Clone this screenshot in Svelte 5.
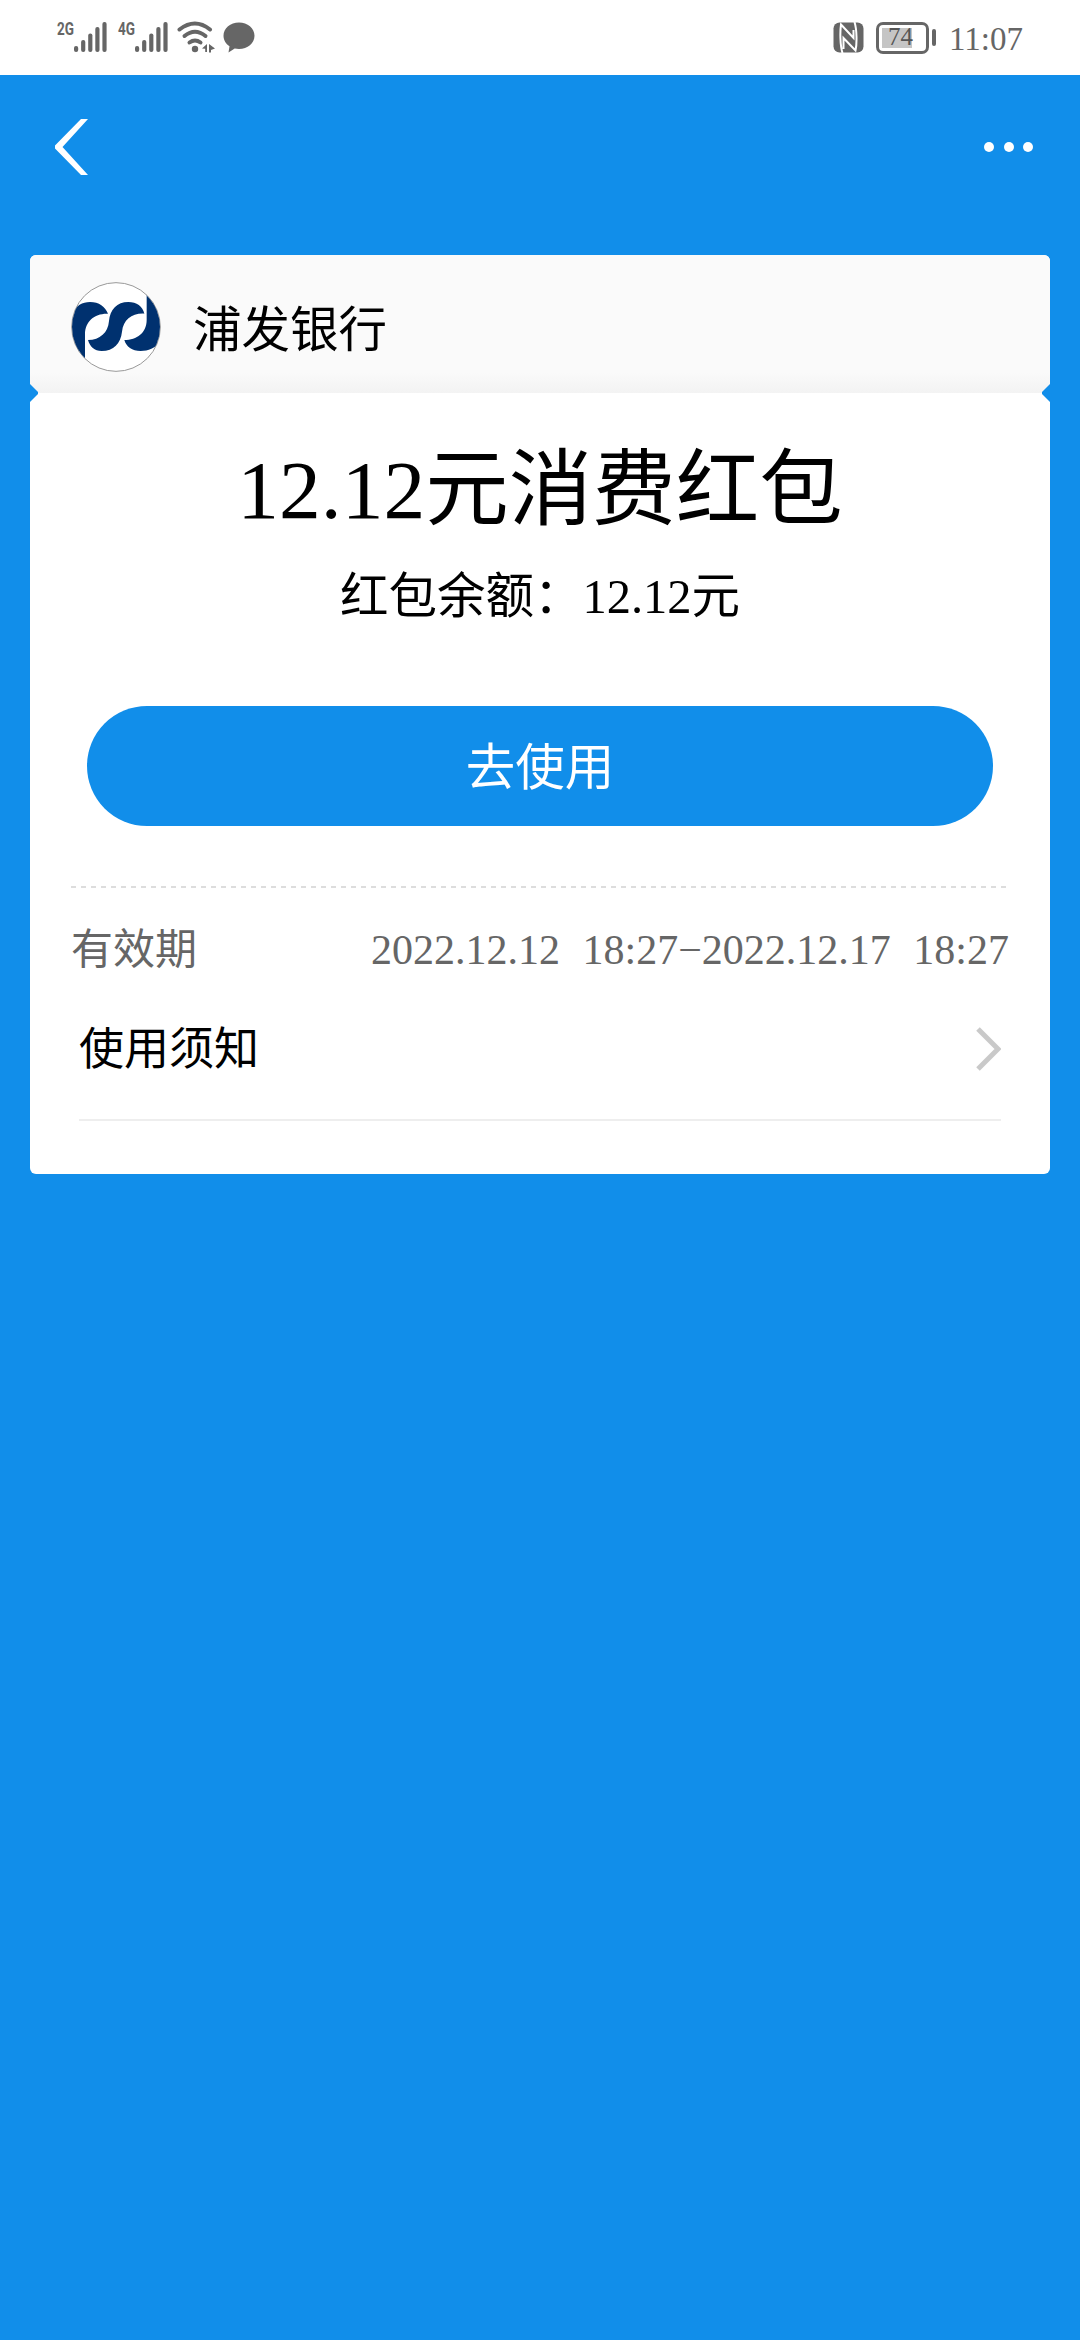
<script lang="ts">
  const bank = '浦发银行';
  const coupon = {
    title: '12.12元消费红包',
    balance: '红包余额：12.12元',
    from: '2022.12.12 18:27',
    to: '2022.12.17 18:27'
  };
  const battery = 74;
  const networks = ['2G', '4G'];
  const bars = [6, 12, 18.5, 25, 30];
</script>

<div class="page">
  <div class="status">
    <div class="left">
      {#each networks as net}
        <svg class="signal" width="51" height="38" viewBox="0 -4 51 38">
          <text x="0" y="16" textLength="17" lengthAdjust="spacingAndGlyphs">{net}</text>
          {#each bars as h, i}
            <rect x={17 + i * 7.1} y={33 - h} width="4.2" height={h} rx="2" />
          {/each}
        </svg>
      {/each}
      <svg class="wifi" width="38" height="34" viewBox="0 0 38 34">
        <g fill="none" stroke="#666" stroke-width="4" stroke-linecap="round">
          <path d="M2.5 10.5Q18 -1.5 33 10.5" />
          <path d="M7.5 17Q18 8.5 28.5 17" />
          <path d="M12.5 23.5Q18 19.5 23.5 23.5" />
        </g>
        <circle cx="18" cy="30" r="3.2" />
        <path d="M30 25v8h-1.8v-3.2L25 29.500zM32 25l6 4.500-4 1.500v2.500h-2z" />
      </svg>
      <svg class="bubble" width="32" height="34" viewBox="0 0 32 34">
        <path d="M16 3.500c8.600 0 15.500 5.800 15.500 13.300S24.600 30 16 30c-1.500 0-3-.2-4.300-.5L5.500 33.500l1-6.200C2.800 24.900.5 21.100.5 16.800.5 9.300 7.400 3.500 16 3.500z" />
      </svg>
    </div>
    <div class="right">
      <svg class="nfc" width="31" height="31" viewBox="0 0 31 31">
        <rect x=".5" y=".5" width="30" height="30" rx="6" />
        <path d="M9.500 31C7 23 7 9 8 2.500L20.500 16V8M21.500 0C24 8 24 22 22.500 28.500L10.500 16v11" fill="none" stroke="#fff" stroke-width="2" />
      </svg>
      <div class="battery">
        <div class="level" style="width: {battery}%"></div>
        <span>{battery}</span>
      </div>
      <div class="nub"></div>
      <span class="time">11:07</span>
    </div>
  </div>

  <div class="nav">
    <svg width="36" height="58" viewBox="0 0 36 58">
      <path d="M27 1h7L8.500 29 34 57h-7L1 30.500v-3z" fill="#fff" />
    </svg>
    <div class="more"><i></i><i></i><i></i></div>
  </div>

  <div class="card">
    <div class="bank">
      <svg class="logo" width="90" height="90" viewBox="213 576 270 270">
        <defs>
          <clipPath id="disc"><circle cx="348" cy="711" r="132" /></clipPath>
        </defs>
        <circle cx="348" cy="711" r="133" fill="#fff" stroke="#999" stroke-width="3" />
        <g fill="#00316f" clip-path="url(#disc)">
          <path d="M205 700C214 658 238 636 270 636c27 0 46 14 54 35-39-2-69 23-69 61v78l-60-40z" />
          <path d="M264 750c36 0 60-22 63-57 3-34 24-57 58-57 25 0 43 13 48 35-37-2-63 18-67 54-4 35-25 58-61 58-22 0-35-13-41-33z" />
          <path d="M373 750c38 0 67-22 67-60V605l60 45v70c-15 43-42 63-78 63-26 0-43-13-49-33z" />
        </g>
      </svg>
      <span>{bank}</span>
      <b class="notch start"></b>
      <b class="notch end"></b>
    </div>
    <div class="body">
      <h1>{coupon.title}</h1>
      <p class="balance">{coupon.balance}</p>
      <button>去使用</button>
      <div class="dashes"></div>
      <div class="validity">
        <span>有效期</span>
        <span class="dates">{coupon.from}−{coupon.to}</span>
      </div>
      <div class="notice">
        <span>使用须知</span>
        <svg width="26" height="46" viewBox="0 0 26 46">
          <path d="M3 3l20 20L3 43" fill="none" stroke="#c9c9c9" stroke-width="5" />
        </svg>
      </div>
    </div>
  </div>
</div>

<style>
  :global(body) {
    background: #118eea;
  }

  .page {
    min-height: 2340px;
    background: #118eea;
    font-family: 'Liberation Serif', 'Noto Sans CJK SC', serif;
    font-weight: 400;
    color: #000;
  }

  .status {
    display: flex;
    justify-content: space-between;
    height: 75px;
    box-sizing: border-box;
    padding: 19px 57px 0;
    background: #fff;
    color: #666;
  }

  .status svg {
    fill: #666;
  }

  .left,
  .right {
    display: flex;
    align-items: flex-start;
  }

  .signal {
    margin: -4px 10px 0 0;
    overflow: visible;
  }

  .signal text {
    font: bold 19px Roboto, sans-serif;
  }

  .wifi {
    margin-left: -2px;
  }

  .bubble {
    margin-left: 8px;
  }

  .nfc {
    margin: 3px 12px 0 0;
  }

  .battery {
    display: grid;
    width: 53px;
    height: 32px;
    margin-top: 3px;
    box-sizing: border-box;
    border: 3px solid #666;
    border-radius: 7px;
    padding: 3px;
  }

  .battery > * {
    grid-area: 1 / 1;
  }

  .level {
    background: #c5c5c5;
  }

  .battery span {
    font-size: 25px;
    line-height: 18px;
    padding-left: 6px;
    color: #555;
  }

  .nub {
    width: 4px;
    height: 17px;
    margin: 10px 13px 0 3px;
    border-radius: 2px;
    background: #666;
  }

  .time {
    font-size: 33px;
    line-height: 40px;
    margin-top: 0;
  }

  .nav {
    display: flex;
    align-items: center;
    justify-content: space-between;
    height: 144px;
    padding: 0 47px 36px 54px;
    box-sizing: content-box;
  }

  .more {
    display: flex;
    gap: 9.5px;
  }

  .more i {
    width: 10px;
    height: 10px;
    border-radius: 50%;
    background: #fff;
  }

  .card {
    margin: 0 30px;
    height: 919px;
    border-radius: 6px;
    background: #fff;
  }

  .bank {
    position: relative;
    display: flex;
    align-items: center;
    gap: 32px;
    height: 138px;
    box-sizing: border-box;
    padding: 6px 41px 0;
    border-radius: 6px 6px 0 0;
    background: linear-gradient(#fafafa 85%, #f3f3f3);
    font-size: 48.5px;
  }

  .bank span {
    margin-top: -3px;
  }

  /* ticket cut-outs where header and body meet */
  .notch {
    position: absolute;
    bottom: -9px;
    width: 8px;
    height: 18px;
    background: #118eea;
  }

  .start {
    left: 0;
    clip-path: polygon(0 0, 100% 45%, 100% 55%, 0 100%);
  }

  .end {
    right: 0;
    clip-path: polygon(100% 0, 0 45%, 0 55%, 100% 100%);
  }

  .body {
    display: flex;
    flex-direction: column;
    padding: 42px 41px 0;
  }

  h1 {
    margin: 0;
    font-size: 83.5px;
    font-weight: 400;
    line-height: 110px;
    text-align: center;
    white-space: nowrap;
  }

  .balance {
    margin: 20px 0 0;
    font-size: 48.5px;
    line-height: 64px;
    text-align: center;
  }

  button {
    height: 120px;
    margin: 77px 16px 0;
    padding: 0 0 5px;
    border: 0;
    border-radius: 60px;
    background: #118eea;
    color: #fff;
    font: inherit;
    font-size: 49.5px;
  }

  .dashes {
    height: 2px;
    margin-top: 60px;
    background: repeating-linear-gradient(90deg, #ddd 0 5px, transparent 5px 10px);
  }

  .validity {
    display: flex;
    justify-content: space-between;
    margin-top: 34px;
    color: #666;
    font-size: 42px;
    line-height: 56px;
  }

  .dates {
    word-spacing: 12px;
  }

  .notice {
    display: flex;
    align-items: center;
    justify-content: space-between;
    height: 143px;
    box-sizing: border-box;
    margin: 0 8px;
    border-bottom: 2px solid #eee;
    font-size: 45px;
  }

  .notice span {
    margin-top: -6px;
  }
</style>
